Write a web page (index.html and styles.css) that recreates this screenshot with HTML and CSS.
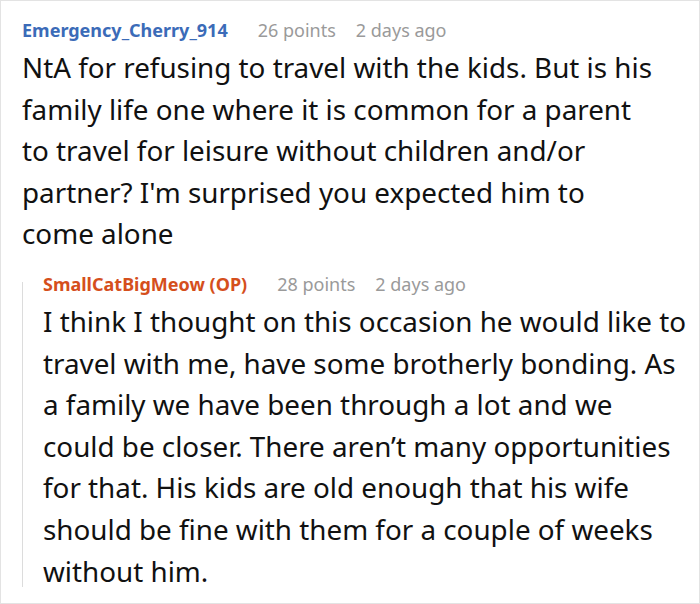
FILE: index.html
```html
<!DOCTYPE html>
<html>
<head>
<meta charset="utf-8">
<link rel="stylesheet" href="styles.css">
</head>
<body>
<div class="frame">
  <div class="comment">
    <div class="meta">
      <span class="user">Emergency_Cherry_914</span>
      <span class="info">26 points</span>
      <span class="info">2 days ago</span>
    </div>
    <p class="text top-text">NtA for refusing to travel with the kids. But is his family life one where it is common for a parent to travel for leisure without children and/or partner? I'm surprised you expected him to come alone</p>
    <div class="reply">
      <div class="meta">
        <span class="user op">SmallCatBigMeow (OP)</span>
        <span class="info">28 points</span>
        <span class="info">2 days ago</span>
      </div>
      <p class="text reply-text">I think I thought on this occasion he would like to travel with me, have some brotherly bonding. As a family we have been through a lot and we<br>could be closer. There aren’t many opportunities for that. His kids are old enough that his wife should be fine with them for a couple of weeks without him.</p>
    </div>
  </div>
</div>
</body>
</html>
```
FILE: styles.css
```css
html, body {
  margin: 0;
  padding: 0;
  background: #fff;
}
.frame {
  width: 700px;
  height: 604px;
  box-sizing: border-box;
  border: 1px solid #e3e3e3;
  padding: 17px 0 0 21px;
  font-family: "Noto Sans", sans-serif;
  color: #111;
  overflow: hidden;
}
.meta {
  display: flex;
  gap: 20px;
  font-size: 18px;
  line-height: 24px;
}
.user {
  font-weight: 700;
  color: #3b6bb8;
  margin-right: 10px;
}
.user.op {
  color: #d54f1c;
}
.info {
  color: #9a9a9a;
}
.text {
  margin: 5px 0 0;
  font-size: 27.8px;
  line-height: 41.6px;
}
.top-text {
  width: 640px;
}
.reply-text {
  width: 652px;
}
.reply {
  position: relative;
  margin-top: 17px;
  padding-left: 21px;
}
.reply::before {
  content: "";
  position: absolute;
  left: 0;
  top: 10px;
  bottom: 5px;
  width: 1px;
  background: #dcdcdc;
}
```
